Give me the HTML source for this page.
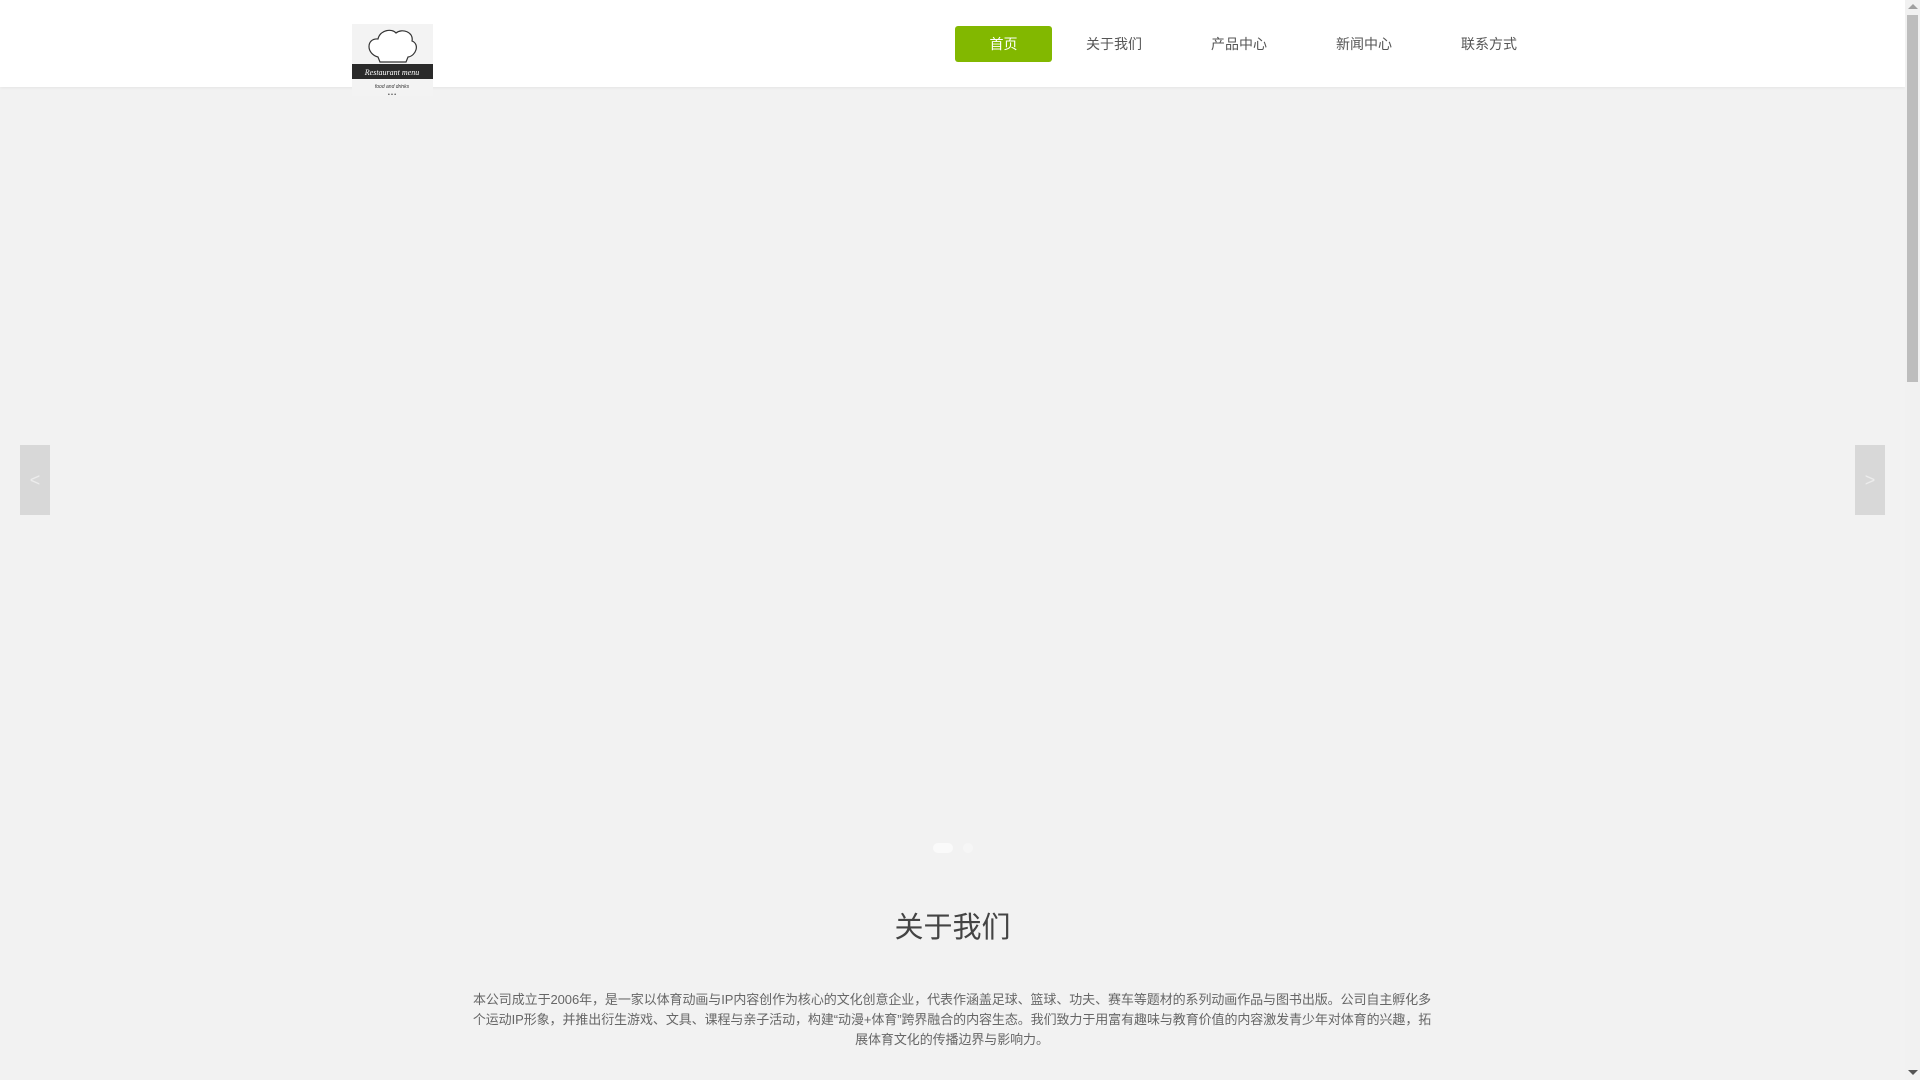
<!DOCTYPE html>
<html><head><meta charset="utf-8"><style>
html,body{margin:0;padding:0;width:1920px;height:1080px;overflow:hidden;background:#f2f2f2;font-family:"Liberation Sans","Noto Sans CJK SC",sans-serif;}
.hdr{position:absolute;left:0;top:0;width:1905px;height:87px;background:#fff;box-shadow:0 1px 3px rgba(0,0,0,0.06);}
.logo{position:absolute;left:352px;top:24px;width:81px;height:72px;background:#f3f3f3;z-index:3}
.nav a{position:absolute;top:26px;height:36px;line-height:36px;font-size:14px;color:#555;text-decoration:none;text-align:center}
.nav a.on{background:#82b800;color:#fff;border-radius:3px}
.arr{position:absolute;top:445px;width:30px;height:70px;background:#d8d8d8;color:#ececec;font-size:18px;line-height:70px;text-align:center}
.sb{position:absolute;left:1905px;top:0;width:15px;height:1080px;background:#f1f1f1}
.th{position:absolute;left:1907px;top:15px;width:11px;height:367px;background:#bdbdbd}
h2{position:absolute;left:0;width:1905px;top:904px;margin:0;text-align:center;font-size:29px;font-weight:normal;color:#444}
p{position:absolute;left:469px;width:966px;top:990px;margin:0;font-size:13px;letter-spacing:-0.08px;line-height:20px;color:#666;text-align:center}
</style></head><body>
<div class="hdr"></div>
<div class="logo"><svg width="81" height="72" viewBox="0 0 81 72">
<path d="M26 33 C14 30 14 14 26 15 C28 6 40 4 44 9 C50 4 62 8 60 17 C68 20 64 32 56 33 L54 38 L28 38 Z" fill="#fff" stroke="#333" stroke-width="1.2"/>
<rect x="0" y="40" width="81" height="15" fill="#2a2a2a"/>
<text x="40" y="51" font-size="8" fill="#fff" text-anchor="middle" font-style="italic" font-family="Liberation Serif,serif">Restaurant menu</text>
<text x="40" y="64" font-size="5" fill="#333" text-anchor="middle" font-style="italic">food and drinks</text>
<text x="40" y="72" font-size="5" fill="#333" text-anchor="middle">• • •</text></svg></div>
<div class="nav">
<a class="on" style="left:955px;width:97px">首页</a>
<a style="left:1064px;width:100px">关于我们</a>
<a style="left:1189px;width:100px">产品中心</a>
<a style="left:1314px;width:100px">新闻中心</a>
<a style="left:1439px;width:100px">联系方式</a>
</div>
<div class="arr" style="left:20px">&lt;</div>
<div class="arr" style="left:1855px">&gt;</div>
<div style="position:absolute;left:933px;top:843px;width:20px;height:10px;border-radius:5px;background:#fafafa"></div>
<div style="position:absolute;left:963px;top:843px;width:10px;height:10px;border-radius:5px;background:#f6f6f6"></div>
<h2>关于我们</h2>
<p>本公司成立于2006年，是一家以体育动画与IP内容创作为核心的文化创意企业，代表作涵盖足球、篮球、功夫、赛车等题材的系列动画作品与图书出版。公司自主孵化多个运动IP形象，并推出衍生游戏、文具、课程与亲子活动，构建“动漫+体育”跨界融合的内容生态。我们致力于用富有趣味与教育价值的内容激发青少年对体育的兴趣，拓展体育文化的传播边界与影响力。</p>
<div class="sb"></div><div class="th"></div>
<div style="position:absolute;left:1908px;top:4px;width:0;height:0;border-left:5px solid transparent;border-right:5px solid transparent;border-bottom:5px solid #a0a0a0"></div>
<div style="position:absolute;left:1908px;top:1070px;width:0;height:0;border-left:5px solid transparent;border-right:5px solid transparent;border-top:5px solid #555"></div>
</body></html>
